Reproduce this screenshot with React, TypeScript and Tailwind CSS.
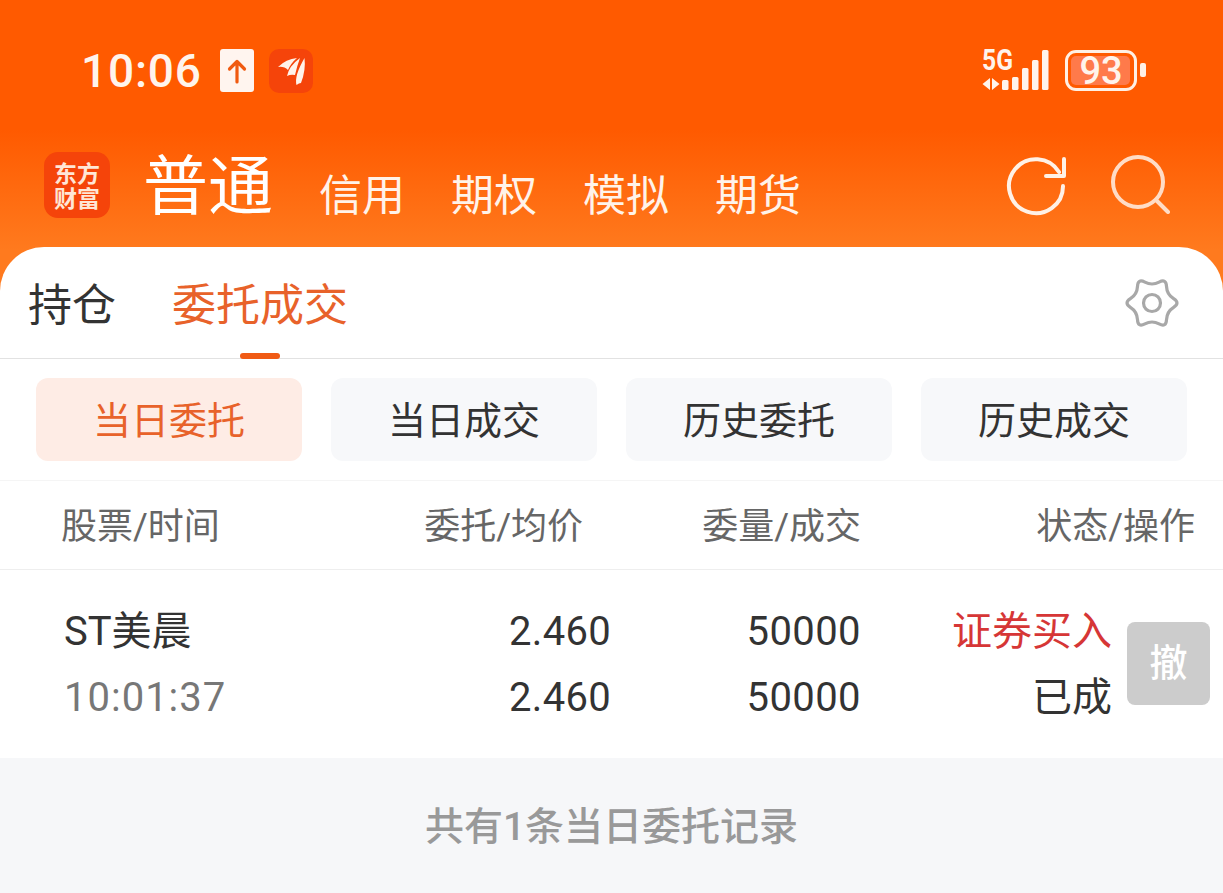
const cjk = "font-['Roboto','Noto_Sans_CJK_SC',sans-serif]";

function Status() {
  return (
    <div className="h-[142px] flex items-start pl-[81px] pr-[77px] pt-[49px]">
      <span className="text-[46px] leading-[44px] font-medium text-[#fff4ec] font-['Roboto',sans-serif] tracking-[0.8px]">10:06</span>
      <div className="ml-[18px] w-[34px] h-[43px] rounded-[3px] bg-[#fff5ef] flex items-center justify-center">
        <svg width="22" height="26" viewBox="0 0 22 26" fill="none" stroke="#f05a10" strokeWidth="3.2" strokeLinecap="round" strokeLinejoin="round">
          <path d="M11 24V4M3.5 11L11 3.5L18.500 11" />
        </svg>
      </div>
      <div className="ml-[15px] w-[44px] h-[44px] rounded-[10px] bg-[#f5440a] flex items-center justify-center">
        <svg width="30" height="30" viewBox="0 0 30 30" fill="#fff3ea">
          <path d="M2 11Q10 3 21 2Q15 7 12 14Q8 10 2 11Z" />
          <path d="M11 20Q13 10 24 2Q21 10 19 19Q15 18 11 20Z" />
          <path d="M20.500 29Q18 20 28.500 2Q30 14 25 27Q23 27 20.500 29Z" />
        </svg>
      </div>
      <div className="ml-auto flex items-start">
        <div className="relative w-[68px] h-[42px]">
          <span className="absolute left-0 top-[-2px] origin-top-left scale-x-[0.85] text-[29px] leading-[26px] font-bold text-[#fff4ec] font-['Roboto',sans-serif]">5G</span>
          <svg className="absolute left-0 top-0" width="68" height="42" viewBox="0 0 68 42" fill="#fff4ec">
            <path d="M8 29V41L0.500 35ZM10 29L17.500 35L10 41Z" />
            <rect x="20" y="31" width="6.500" height="10" rx="1.500" />
            <rect x="30" y="28" width="6.500" height="13" rx="1.500" />
            <rect x="40" y="19" width="6.500" height="22" rx="1.500" />
            <rect x="50" y="11" width="6.500" height="30" rx="1.500" />
            <rect x="60" y="1" width="6.500" height="40" rx="1.500" />
          </svg>
        </div>
        <div className="ml-[15px] mt-[1px] w-[72px] h-[41px] rounded-[11px] border-[3px] border-[#fff0e4] relative flex items-center justify-center">
          <div className="absolute left-[3px] top-[3px] bottom-[3px] right-[4px] rounded-[5px] bg-[#ff7a4a]" />
          <span className="relative text-[38px] leading-[36px] font-medium text-[#fff4ec] font-['Roboto',sans-serif]">93</span>
        </div>
        <div className="ml-[3px] mt-[14px] w-[6px] h-[14px] rounded-[2px] bg-[#fff0e4]" />
      </div>
    </div>
  );
}

function Nav() {
  return (
    <div className="h-[105px] flex items-start pl-[44px] pr-[53px] pt-[10px] text-white">
      <div className="w-[66px] h-[66px] rounded-[14px] bg-[#f5440a] flex flex-col items-center justify-center text-[23px] leading-[25px] font-semibold text-[#ffe6d6] font-['Noto_Sans_CJK_SC',sans-serif]">
        <span>东方</span>
        <span>财富</span>
      </div>
      <span className="ml-[33px] mt-[-11px] text-[65px] leading-[80px] font-['Noto_Sans_CJK_SC',sans-serif]">普通</span>
      <div className="ml-[46px] mt-[10px] flex gap-[46px] text-[43px] leading-[60px] text-[#fff3ea] font-['Noto_Sans_CJK_SC',sans-serif]">
        <span>信用</span>
        <span>期权</span>
        <span>模拟</span>
        <span>期货</span>
      </div>
      <div className="ml-auto flex gap-[44px] mt-[2px]">
        <svg className="mt-[3px]" width="60" height="60" viewBox="0 0 60 60" fill="none" stroke="#fff1e6" strokeWidth="4" strokeLinecap="round" strokeLinejoin="round">
          <path d="M57 29A27 27 0 1 1 53 15" />
          <path d="M40 19H58V2" />
        </svg>
        <svg width="60" height="60" viewBox="0 0 60 60" fill="none" stroke="#ffdcc6" strokeWidth="4" strokeLinecap="round">
          <circle cx="28" cy="28" r="25" />
          <path d="M46 46L58 58" />
        </svg>
      </div>
    </div>
  );
}

export default function App() {
  return (
    <div className={`w-[1223px] h-[893px] overflow-hidden bg-[linear-gradient(180deg,#ff5a00_0px,#ff5a00_130px,#ff7a1e_250px)] ${cjk}`}>
      <Status />
      <Nav />
      <div className="h-[646px] bg-white rounded-t-[44px] flex flex-col overflow-hidden">
        <div className="h-[112px] shrink-0 flex items-start pl-[28px] pr-[45px] pt-[25px] border-b border-[#e2e2e2] relative font-['Noto_Sans_CJK_SC',sans-serif]">
          <span className="text-[44px] leading-[60px] text-[#333333]">持仓</span>
          <span className="ml-[56px] text-[44px] leading-[60px] text-[#e8622a]">委托成交</span>
          <div className="absolute left-[240px] bottom-[-1px] w-[40px] h-[6px] rounded-full bg-[#f05a14]" />
          <svg className="ml-auto mt-[5px] overflow-visible" width="52" height="52" viewBox="0 0 52 52" fill="none" stroke="#a8a8a8" strokeWidth="3.200" strokeLinejoin="round">
            <path d="M47.61 21.72Q40.84 17.43 40.52 9.43Q40.19 1.42 33.1 5.14Q26 8.86 18.9 5.14Q11.81 1.42 11.49 9.43Q11.16 17.43 4.39 21.72Q-2.38 26 4.39 30.28Q11.16 34.57 11.49 42.57Q11.81 50.58 18.9 46.86Q26 43.14 33.1 46.86Q40.19 50.58 40.52 42.57Q40.84 34.57 47.61 30.28Q54.38 26 47.61 21.72Z" />
            <circle cx="26" cy="26" r="8.500" />
          </svg>
        </div>
        <div className="h-[122px] shrink-0 flex items-start pl-[36px] gap-[29px] pt-[19px] border-b border-[#f5f5f5] font-['Noto_Sans_CJK_SC',sans-serif]">
          <div className="w-[266px] h-[83px] pb-[4px] rounded-[12px] bg-[#feece5] text-[#e8622a] text-[38px] flex items-center justify-center">当日委托</div>
          <div className="w-[266px] h-[83px] pb-[4px] rounded-[12px] bg-[#f7f8fa] text-[#333333] text-[38px] flex items-center justify-center">当日成交</div>
          <div className="w-[266px] h-[83px] pb-[4px] rounded-[12px] bg-[#f7f8fa] text-[#333333] text-[38px] flex items-center justify-center">历史委托</div>
          <div className="w-[266px] h-[83px] pb-[4px] rounded-[12px] bg-[#f7f8fa] text-[#333333] text-[38px] flex items-center justify-center">历史成交</div>
        </div>
        <div className="h-[89px] shrink-0 flex items-center border-b border-[#eeeeee] text-[36px] text-[#666666] pt-[4px]">
          <span className="ml-[61px] w-[157px] whitespace-nowrap">股票/时间</span>
          <span className="w-[365px] text-right">委托/均价</span>
          <span className="w-[278px] text-right">委量/成交</span>
          <span className="w-[334px] text-right">状态/操作</span>
        </div>
        <div className="h-[188px] shrink-0 flex items-center text-[#333333] pt-[2px]">
          <div className="ml-[64px] w-[300px] flex flex-col gap-[14px]">
            <span className="text-[40px] leading-[52px]">ST美晨</span>
            <span className="text-[40px] leading-[52px] text-[#777777] tracking-[1px]">10:01:37</span>
          </div>
          <div className="w-[247px] flex flex-col gap-[14px] items-end text-[40px] leading-[52px] tracking-[0.3px]">
            <span>2.460</span>
            <span>2.460</span>
          </div>
          <div className="w-[250px] flex flex-col gap-[14px] items-end text-[40px] leading-[52px] tracking-[0.4px]">
            <span>50000</span>
            <span>50000</span>
          </div>
          <div className="w-[251px] flex flex-col gap-[14px] items-end text-[40px] leading-[52px]">
            <span className="text-[#d63636]">证券买入</span>
            <span>已成</span>
          </div>
          <div className="ml-[15px] mb-[4px] w-[83px] h-[83px] rounded-[8px] bg-[#cccccc] text-white text-[38px] font-medium flex items-center justify-center">撤</div>
        </div>
        <div className="flex-1 bg-[#f6f7f9] flex items-start justify-center pt-[39px] text-[39px] leading-[60px] font-medium text-[#999999]">
          共有1条当日委托记录
        </div>
      </div>
    </div>
  );
}
